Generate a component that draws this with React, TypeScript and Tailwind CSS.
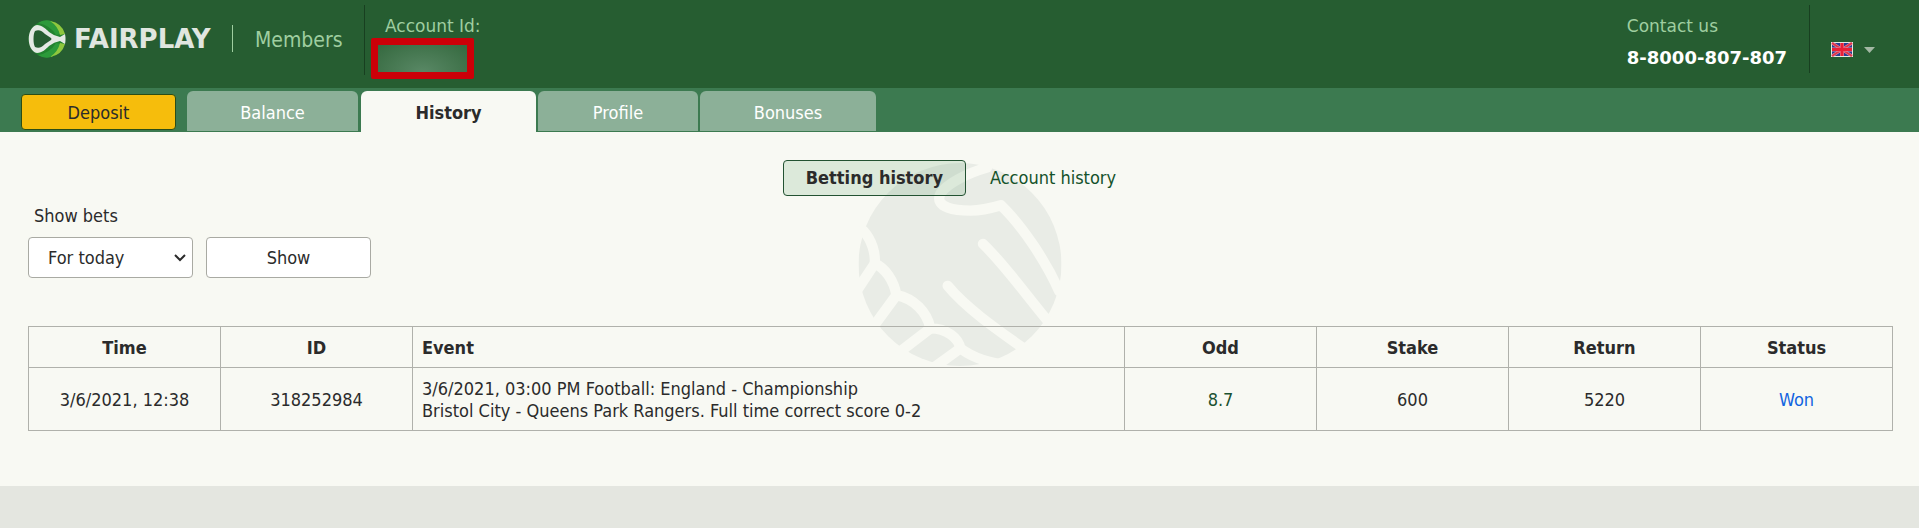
import { ReactNode } from "react"

interface Bet {
    time: string
    id: string
    event: string[]
    odd: string
    stake: string
    payout: string
    status: string
}

const bets: Bet[] = [
    {
        time: "3/6/2021, 12:38",
        id: "318252984",
        event: [
            "3/6/2021, 03:00 PM Football: England - Championship",
            "Bristol City - Queens Park Rangers. Full time correct score 0-2",
        ],
        odd: "8.7",
        stake: "600",
        payout: "5220",
        status: "Won",
    },
]

function LogoMark() {
    return (
        <svg viewBox="0 0 38 38" className="size-[38px]" aria-hidden="true">
            <circle cx="19" cy="19" r="18.5" fill="#22832f" />
            <path d="M10 3 Q22 5 28 15 L33 14 Q30 5 23 1 Q16 -1 10 3Z" fill="#2c9a3a" />
            <path d="M10 35 Q22 33 28 23 L33 24 Q30 33 23 37 Q16 39 10 35Z" fill="#2c9a3a" />
            <path d="M22 1 Q30 6 32 15 L37 14 Q34 3 22 1Z" fill="#8fc73e" />
            <path d="M22 37 Q30 32 32 23 L37 24 Q34 35 22 37Z" fill="#8fc73e" />
            <path
                d="M9 5 C14 5 18 9 21 12 Q26 16 32 17 L37 14 Q38 19 37 24 L32 21 Q26 22 21 26 C18 29 14 33 9 33 C-2 31 -2 7 9 5Z"
                fill="#e4e9e4"
            />
            <path
                d="M7 11 C11 9 14 11 17 14 L23 18 Q24 19 23 20 L17 24 C14 27 11 29 7 27 C5 24 5 14 7 11Z"
                fill="#265d31"
            />
        </svg>
    )
}

function UkFlag() {
    return (
        <svg viewBox="0 0 22 15" className="h-[15px] w-[22px]" aria-hidden="true">
            <rect width="22" height="15" fill="#e3ebe3" />
            <rect x="1" y="1" width="20" height="13" fill="#2c3c94" />
            <path d="M1 1 L21 14 M21 1 L1 14" stroke="#e58ea2" strokeWidth="3" />
            <path d="M1 1 L21 14 M21 1 L1 14" stroke="#e0354a" strokeWidth="2" />
            <path d="M11 1 V14 M1 7.500 H21" stroke="#e58ea2" strokeWidth="4" />
            <path d="M11 1 V14 M1 7.500 H21" stroke="#ea1f36" strokeWidth="3" />
        </svg>
    )
}

function Handshake() {
    return (
        <svg viewBox="0 0 610 610" className="absolute left-1/2 top-[31px] size-[203px] -translate-x-1/2" aria-hidden="true">
            <circle cx="305" cy="305" r="305" fill="#e9ece6" />
            <g fill="none" stroke="#f8f9f3" strokeWidth="31" strokeLinecap="round" strokeLinejoin="round">
                <path d="M386 14 C326 31 266 62 246 92 C226 137 296 143 336 143 C371 143 401 135 428 127 C496 192 566 302 603 385" />
                <path d="M374 243 C446 312 506 402 590 500" />
                <path d="M268 369 C326 440 430 510 520 574" />
                <path d="M14 203 C41 232 51 272 49 302 C81 317 106 352 114 397 C166 407 206 447 216 497 C266 497 301 527 306 557 C340 582 390 602 450 606" />
                <path d="M49 302 L-4 382 M114 397 L46 490 M216 497 L126 566 M306 557 L230 612" />
            </g>
        </svg>
    )
}

function Tab({ children, className }: { children: ReactNode; className: string }) {
    return (
        <a href="#" className={`flex h-10 items-center justify-center rounded-t-md bg-[#8cb098] pt-1 text-white ${className}`}>
            {children}
        </a>
    )
}

function Header() {
    return (
        <header className="flex h-[88px] justify-between bg-[#265d31] font-['DejaVu_Sans',sans-serif] text-[17px] text-[#9fcea0]">
            <div className="flex">
                <div className="flex h-[77px] items-center pl-7">
                    <LogoMark />
                    <span className="ml-2 w-[138px] text-[26px] font-bold text-[#e0e6e0]">FAIRPLAY</span>
                    <span className="ml-5 h-[27px] w-px bg-[#9fcea0]" />
                    <span className="ml-[22px] w-[109px] pt-0.5 font-['DejaVu_Sans_Condensed','DejaVu_Sans',sans-serif] text-[21px]">Members</span>
                </div>
                <div className="mt-[5px] h-[70px] w-px bg-[#183f20]" />
                <div className="ml-1.5 pt-3.5">
                    <div className="pl-3.5 leading-6">Account Id:</div>
                    <div className="h-[41px] w-[103px] rounded-xs border-7 border-[#cc0008] bg-[radial-gradient(ellipse_at_bottom,#598865,#35693f)]" />
                </div>
            </div>
            <div className="flex">
                <div className="mr-[22px] pt-3.5 leading-6">
                    <div>Contact us</div>
                    <div className="mt-2 text-lg/6 font-bold text-white">8-8000-807-807</div>
                </div>
                <div className="mt-[5px] h-[68px] w-px bg-[#183f20]" />
                <button aria-label="Language" className="mr-11 ml-[21px] flex h-[99px] items-center gap-[11px]">
                    <UkFlag />
                    <svg viewBox="0 0 11 6" className="h-1.5 w-[11px]" aria-hidden="true">
                        <path d="M0 0 H11 L5.500 6Z" fill="#a3b8a4" />
                    </svg>
                </button>
            </div>
        </header>
    )
}

function BetsTable() {
    const head = "h-[41px] w-[192px] border border-[#b0b1ab] px-2 pt-0.5 font-bold"
    const cell = "h-[63px] border border-[#b0b1ab] px-2 pt-0.5"

    return (
        <table className="mt-12 w-full border-collapse text-center">
            <thead>
                <tr>
                    <th className={head}>Time</th>
                    <th className={head}>ID</th>
                    <th className="border border-[#b0b1ab] px-[9px] pt-0.5 text-left font-bold">Event</th>
                    <th className={head}>Odd</th>
                    <th className={head}>Stake</th>
                    <th className={head}>Return</th>
                    <th className={head}>Status</th>
                </tr>
            </thead>
            <tbody>
                {bets.map((bet) => (
                    <tr key={bet.id}>
                        <td className={cell}>{bet.time}</td>
                        <td className={cell}>{bet.id}</td>
                        <td className="border border-[#b0b1ab] px-[9px] pt-0.5 text-left leading-[22px]">
                            {bet.event.map((line) => (
                                <div key={line}>{line}</div>
                            ))}
                        </td>
                        <td className={`${cell} text-[#1b5130]`}>{bet.odd}</td>
                        <td className={cell}>{bet.stake}</td>
                        <td className={cell}>{bet.payout}</td>
                        <td className={`${cell} text-[#1264e0]`}>{bet.status}</td>
                    </tr>
                ))}
            </tbody>
        </table>
    )
}

export default function App() {
    return (
        <div className="min-h-screen bg-[#e4e6e0] font-['DejaVu_Sans_Condensed','DejaVu_Sans',sans-serif] text-lg/6 text-[#2b2b2b]">
            <Header />
            <nav className="flex h-11 items-start bg-[#3c7a50] pt-[3px] pl-[21px]">
                <button className="mt-[3px] mr-[11px] h-9 w-[155px] rounded-sm border border-[#2b4d16] bg-[#f6bd0c] pt-0.5">Deposit</button>
                <Tab className="mr-[3px] w-[171px]">Balance</Tab>
                <a href="#" aria-current="page" className="mr-0.5 flex h-[41px] w-[175px] items-center justify-center rounded-t-md bg-[#f8f9f3] pt-0.5 font-bold">
                    History
                </a>
                <Tab className="mr-0.5 w-[160px]">Profile</Tab>
                <Tab className="w-[176px]">Bonuses</Tab>
            </nav>
            <main className="relative bg-[#f8f9f3] pt-7 pr-[26px] pb-[55px] pl-7">
                <Handshake />
                <div className="relative">
                    <div className="flex items-center justify-center pl-0.5">
                        <button className="h-9 w-[183px] rounded-sm border border-[#235232] bg-[#3c9050]/15 font-bold">Betting history</button>
                        <a href="#" className="px-6 text-[#14522a]">Account history</a>
                    </div>
                    <label htmlFor="period" className="mt-2 block pl-1.5">Show bets</label>
                    <div className="mt-[9px] flex gap-[13px]">
                        <div className="relative">
                            <select id="period" className="h-[41px] w-[165px] appearance-none rounded-sm border border-[#a9aaa3] bg-white pl-[19px]">
                                <option>For today</option>
                            </select>
                            <svg viewBox="0 0 12 8" className="pointer-events-none absolute top-[17px] right-[7px] h-2 w-3" aria-hidden="true">
                                <path d="M1 1 L6 6 L11 1" fill="none" stroke="#2b2b2b" strokeWidth="2" />
                            </svg>
                        </div>
                        <button className="h-[41px] w-[165px] rounded-sm border border-[#a9aaa3] bg-white">Show</button>
                    </div>
                    <BetsTable />
                </div>
            </main>
        </div>
    )
}
